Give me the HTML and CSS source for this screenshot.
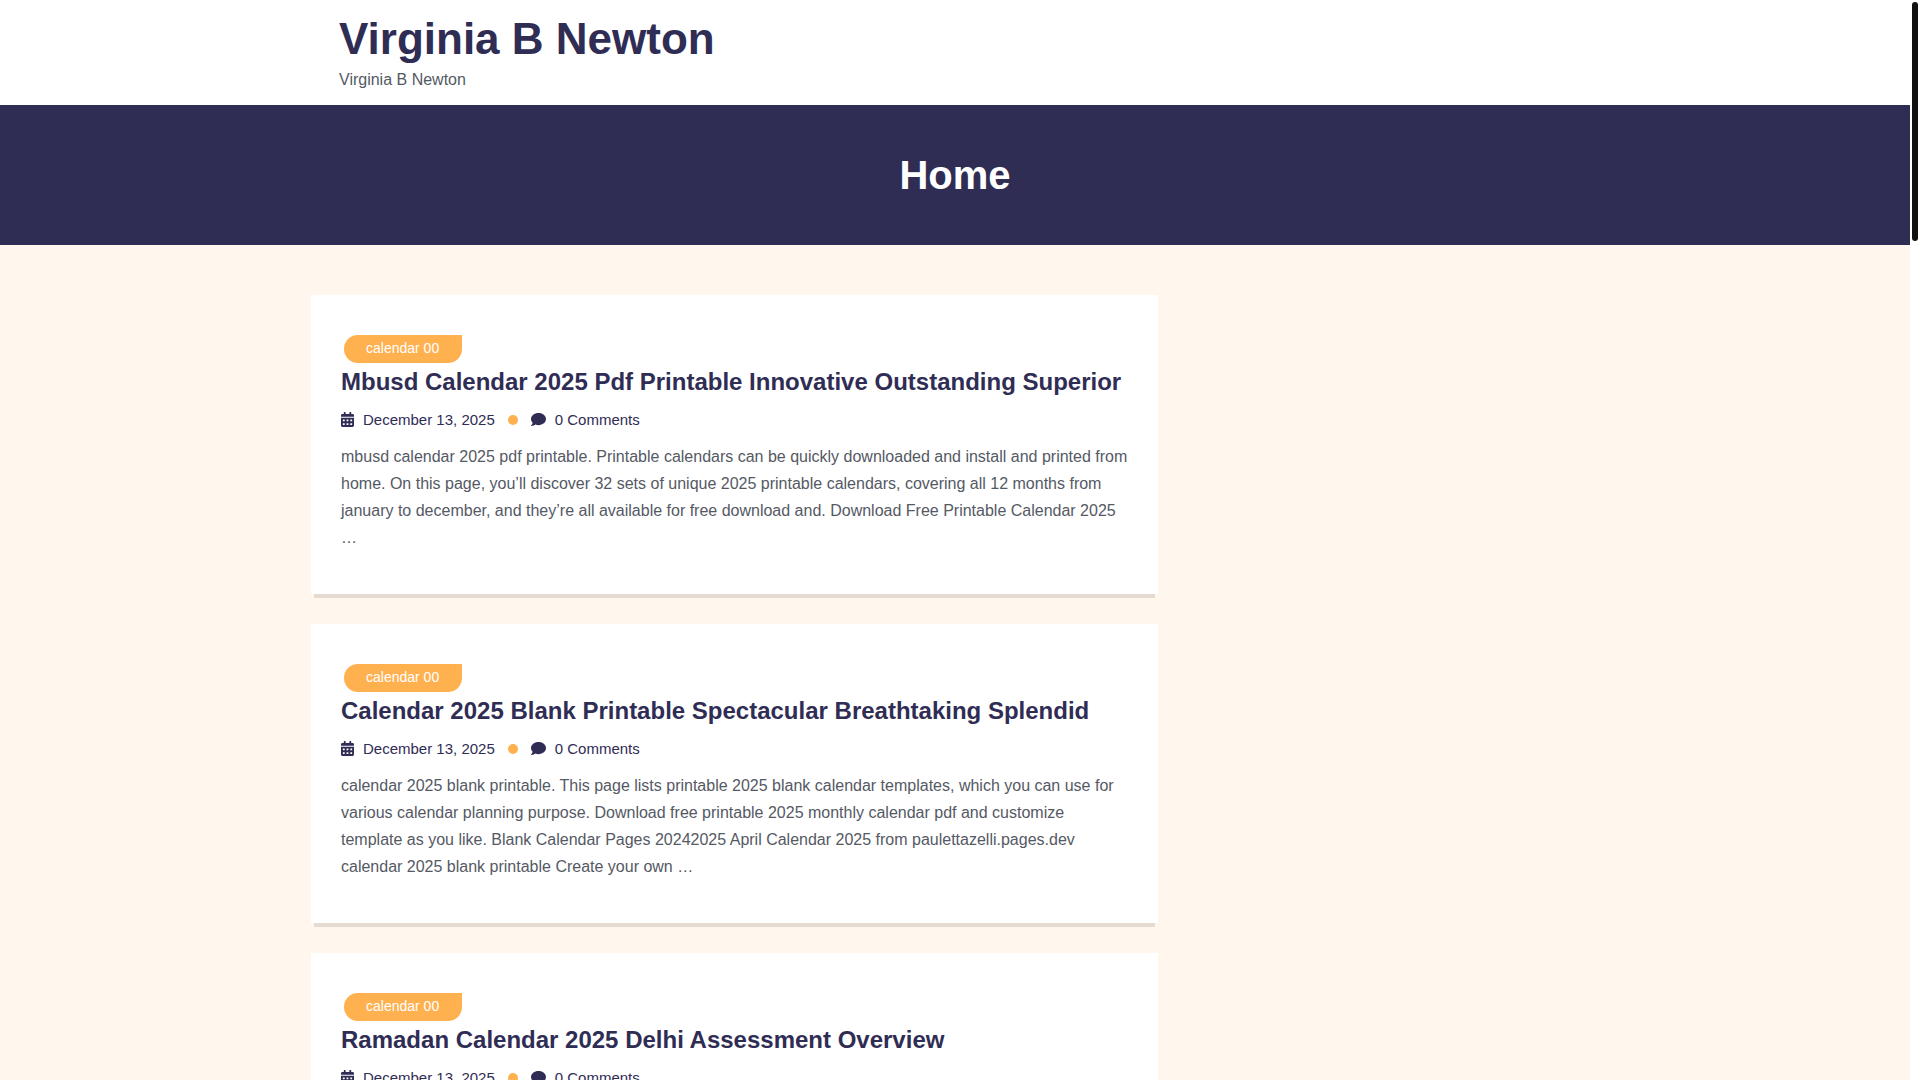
FILE: index.html
```html
<!DOCTYPE html>
<html lang="en">
<head>
    <meta charset="UTF-8">
    <meta name="viewport" content="width=device-width, initial-scale=1.0">
    <title>Virginia B Newton</title>
    <link rel="stylesheet" href="styles.css">
</head>
<body>
    <svg class="sprite" aria-hidden="true">
        <symbol id="icon-calendar" viewBox="0 0 448 512">
            <path d="M0 464c0 26.500 21.500 48 48 48h352c26.500 0 48-21.500 48-48V192H0v272zm320-196c0-6.600 5.400-12 12-12h40c6.600 0 12 5.400 12 12v40c0 6.600-5.400 12-12 12h-40c-6.600 0-12-5.400-12-12v-40zm0 128c0-6.600 5.400-12 12-12h40c6.600 0 12 5.400 12 12v40c0 6.600-5.400 12-12 12h-40c-6.600 0-12-5.400-12-12v-40zM192 268c0-6.600 5.400-12 12-12h40c6.600 0 12 5.400 12 12v40c0 6.600-5.400 12-12 12h-40c-6.600 0-12-5.400-12-12v-40zm0 128c0-6.600 5.400-12 12-12h40c6.600 0 12 5.400 12 12v40c0 6.600-5.400 12-12 12h-40c-6.600 0-12-5.400-12-12v-40zM64 268c0-6.600 5.400-12 12-12h40c6.600 0 12 5.400 12 12v40c0 6.600-5.400 12-12 12H76c-6.600 0-12-5.400-12-12v-40zm0 128c0-6.600 5.400-12 12-12h40c6.600 0 12 5.400 12 12v40c0 6.600-5.400 12-12 12H76c-6.600 0-12-5.400-12-12v-40zM400 64h-48V16c0-8.800-7.200-16-16-16h-32c-8.800 0-16 7.200-16 16v48H160V16c0-8.800-7.200-16-16-16h-32c-8.800 0-16 7.200-16 16v48H48C21.500 64 0 85.500 0 112v48h448v-48c0-26.500-21.500-48-48-48z"/>
        </symbol>
        <symbol id="icon-comment" viewBox="0 0 512 512">
            <path d="M256 32C114.600 32 0 125.100 0 240c0 49.600 21.400 95 57 130.700C44.500 421.100 2.700 466 2.200 466.500c-2.200 2.300-2.800 5.700-1.500 8.700S4.800 480 8 480c66.300 0 116-31.800 140.600-51.400 32.700 12.300 69 19.400 107.400 19.400 141.400 0 256-93.100 256-208S397.400 32 256 32z"/>
        </symbol>
    </svg>

    <div class="page">
        <header class="site-header">
            <div class="header-inner">
                <h1 class="site-title"><a href="#">Virginia B Newton</a></h1>
                <p class="site-description">Virginia B Newton</p>
            </div>
        </header>

        <section class="page-banner">
            <h2>Home</h2>
        </section>

        <div class="content">
            <main class="posts">
                <article class="post">
                    <a class="category" href="#">calendar 00</a>
                    <h3 class="post-title"><a href="#">Mbusd Calendar 2025 Pdf Printable Innovative Outstanding Superior</a></h3>
                    <div class="post-meta">
                        <a href="#"><svg class="icon-calendar"><use href="#icon-calendar"/></svg>December 13, 2025</a>
                        <span class="dot"></span>
                        <a href="#"><svg class="icon-comment"><use href="#icon-comment"/></svg>0 Comments</a>
                    </div>
                    <p class="excerpt">mbusd calendar 2025 pdf printable. Printable calendars can be quickly downloaded and install and printed from home. On this page, you’ll discover 32 sets of unique 2025 printable calendars, covering all 12 months from january to december, and they’re all available for free download and. Download Free Printable Calendar 2025 …</p>
                </article>

                <article class="post">
                    <a class="category" href="#">calendar 00</a>
                    <h3 class="post-title"><a href="#">Calendar 2025 Blank Printable Spectacular Breathtaking Splendid</a></h3>
                    <div class="post-meta">
                        <a href="#"><svg class="icon-calendar"><use href="#icon-calendar"/></svg>December 13, 2025</a>
                        <span class="dot"></span>
                        <a href="#"><svg class="icon-comment"><use href="#icon-comment"/></svg>0 Comments</a>
                    </div>
                    <p class="excerpt">calendar 2025 blank printable. This page lists printable 2025 blank calendar templates, which you can use for various calendar planning purpose. Download free printable 2025 monthly calendar pdf and customize template as you like. Blank Calendar Pages 20242025 April Calendar 2025 from paulettazelli.pages.dev calendar 2025 blank printable Create your own …</p>
                </article>

                <article class="post">
                    <a class="category" href="#">calendar 00</a>
                    <h3 class="post-title"><a href="#">Ramadan Calendar 2025 Delhi Assessment Overview</a></h3>
                    <div class="post-meta">
                        <a href="#"><svg class="icon-calendar"><use href="#icon-calendar"/></svg>December 13, 2025</a>
                        <span class="dot"></span>
                        <a href="#"><svg class="icon-comment"><use href="#icon-comment"/></svg>0 Comments</a>
                    </div>
                </article>
            </main>
        </div>
    </div>
    <div class="scrollbar" aria-hidden="true"><div class="scrollbar-thumb"></div></div>
</body>
</html>
```

FILE: styles.css
```css
* {
    box-sizing: border-box;
}
body {
    display: flex;
    height: 100vh;
    margin: 0;
    overflow: hidden;
    font-family: "Liberation Sans", Arial, sans-serif;
    font-size: 16px;
    line-height: 27px;
    color: #555964;
    background-color: #fff;
}
a {
    color: inherit;
    text-decoration: none;
}
h1, h2, h3, p {
    margin: 0;
}
.sprite {
    display: none;
}
.page {
    flex: 1;
    overflow: hidden;
    background-color: #fff6ed;
}

/* Header */
.site-header {
    padding: 12px 0;
    background-color: #fff;
}
.header-inner {
    max-width: 1232px;
    margin: 0 auto;
}
.site-title {
    font-size: 44px;
    line-height: 54px;
    color: #302d55;
}
.page-banner {
    padding: 42px 0;
    background-color: #302d55;
    color: #fff;
    text-align: center;
}
.page-banner h2 {
    font-size: 40px;
    line-height: 56px;
}

/* Posts */
.content {
    display: grid;
    grid-template-columns: 2fr 1fr;
    gap: 18px;
    max-width: 1288px;
    margin: 0 auto;
    padding-top: 50px;
}
.post {
    min-height: 299px;
    margin-bottom: 30px;
    padding: 40px 30px;
    background-color: #fff;
    box-shadow: 0 7px 0 -3px #e5dbd1;
}
.category {
    display: block;
    width: fit-content;
    margin-left: 3px;
    padding: 0 23px 2px 22px;
    border-radius: 15px 0 15px 15px;
    background-color: #ffb04f;
    color: #fff;
    font-size: 14px;
    line-height: 26px;
}
.post-title {
    color: #302d55;
    font-size: 24px;
    line-height: 38px;
}
.post-meta {
    display: flex;
    align-items: center;
    gap: 13px;
    padding: 5px 0 10px;
    color: #302d55;
    font-size: 15px;
    line-height: 27px;
}
.post-meta a {
    display: flex;
    align-items: center;
    gap: 9px;
}
.post-meta svg {
    height: 15px;
    fill: #302d55;
}
.icon-calendar {
    width: 13px;
}
.icon-comment {
    width: 15px;
}
.dot {
    width: 10px;
    height: 10px;
    border-radius: 50%;
    background-color: #ffb04f;
}

/* Scrollbar */
.scrollbar {
    width: 10px;
    padding: 2px;
    background-color: #fff;
}
.scrollbar-thumb {
    height: 22.1vh;
    border-radius: 3px;
    background-color: #111;
}
```
